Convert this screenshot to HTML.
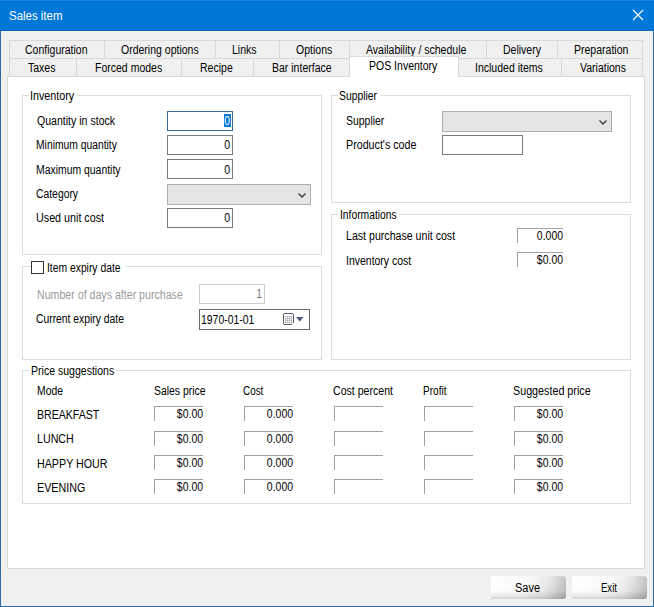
<!DOCTYPE html>
<html><head><meta charset="utf-8"><style>
html,body{margin:0;padding:0;width:654px;height:607px;overflow:hidden;background:#F0F0F0}
body>div,body>svg{position:absolute;box-sizing:border-box}
.t{font-family:"Liberation Sans", sans-serif;font-size:12px;line-height:14px;white-space:nowrap;transform-origin:0 0}
.r{text-align:right}
.btn{border-radius:2px 3px 3px 1px;background:linear-gradient(180deg,rgba(0,0,0,0) 0%,rgba(0,0,0,0) 62%,rgba(0,0,0,.07) 85%,rgba(0,0,0,.16) 100%),linear-gradient(112deg,#ffffff 0%,#f9f9f9 48%,#e6e6e6 72%,#c2c2c2 92%,#b0b0b0 100%)}
</style></head><body>
<div style="left:0px;top:0px;width:654px;height:31px;background:#0078D7"></div>
<div style="left:0px;top:0px;width:654px;height:1px;background:#1A85DC"></div>
<div style="left:0px;top:30px;width:654px;height:1px;background:#0F66B8"></div>
<div class="t" style="left:8.75px;top:9px;color:#fff;transform:scaleX(0.954);">Sales item</div>
<svg style="position:absolute;left:632px;top:9px" width="12" height="12" viewBox="0 0 12 12"><path d="M1 1L11 11M11 1L1 11" stroke="#fff" stroke-width="1.1"/></svg>
<div style="left:0px;top:31px;width:1px;height:576px;background:#2E6A9E"></div>
<div style="left:653px;top:31px;width:1px;height:576px;background:#2E6A9E"></div>
<div style="left:0px;top:606px;width:654px;height:1px;background:#1B70B8"></div>
<div style="left:7px;top:76px;width:638px;height:493px;border:1px solid #D9D9D9;background:#fff;"></div>
<div style="left:9px;top:40px;width:96px;height:19px;border:1px solid #D9D9D9;background:#F0F0F0;"></div>
<div class="t" style="left:24.5px;top:43px;color:#000;transform:scaleX(0.876);">Configuration</div>
<div style="left:104px;top:40px;width:112px;height:19px;border:1px solid #D9D9D9;background:#F0F0F0;"></div>
<div class="t" style="left:120.5px;top:43px;color:#000;transform:scaleX(0.876);">Ordering options</div>
<div style="left:215px;top:40px;width:65px;height:19px;border:1px solid #D9D9D9;background:#F0F0F0;"></div>
<div class="t" style="left:231.5px;top:43px;color:#000;transform:scaleX(0.876);">Links</div>
<div style="left:279px;top:40px;width:71px;height:19px;border:1px solid #D9D9D9;background:#F0F0F0;"></div>
<div class="t" style="left:295.5px;top:43px;color:#000;transform:scaleX(0.876);">Options</div>
<div style="left:349px;top:40px;width:138px;height:19px;border:1px solid #D9D9D9;background:#F0F0F0;"></div>
<div class="t" style="left:365.5px;top:43px;color:#000;transform:scaleX(0.876);">Availability / schedule</div>
<div style="left:486px;top:40px;width:72px;height:19px;border:1px solid #D9D9D9;background:#F0F0F0;"></div>
<div class="t" style="left:502.5px;top:43px;color:#000;transform:scaleX(0.876);">Delivery</div>
<div style="left:557px;top:40px;width:86px;height:19px;border:1px solid #D9D9D9;background:#F0F0F0;"></div>
<div class="t" style="left:573.5px;top:43px;color:#000;transform:scaleX(0.876);">Preparation</div>
<div style="left:9px;top:58px;width:68px;height:19px;border:1px solid #D9D9D9;background:#F0F0F0;"></div>
<div class="t" style="left:27.5px;top:61px;color:#000;transform:scaleX(0.876);">Taxes</div>
<div style="left:76px;top:58px;width:106px;height:19px;border:1px solid #D9D9D9;background:#F0F0F0;"></div>
<div class="t" style="left:94.5px;top:61px;color:#000;transform:scaleX(0.876);">Forced modes</div>
<div style="left:181px;top:58px;width:73px;height:19px;border:1px solid #D9D9D9;background:#F0F0F0;"></div>
<div class="t" style="left:199.5px;top:61px;color:#000;transform:scaleX(0.876);">Recipe</div>
<div style="left:253px;top:58px;width:97px;height:19px;border:1px solid #D9D9D9;background:#F0F0F0;"></div>
<div class="t" style="left:271.5px;top:61px;color:#000;transform:scaleX(0.876);">Bar interface</div>
<div style="left:458px;top:58px;width:104px;height:19px;border:1px solid #D9D9D9;background:#F0F0F0;"></div>
<div class="t" style="left:474.5px;top:61px;color:#000;transform:scaleX(0.876);">Included items</div>
<div style="left:561px;top:58px;width:82px;height:19px;border:1px solid #D9D9D9;background:#F0F0F0;"></div>
<div class="t" style="left:579.5px;top:61px;color:#000;transform:scaleX(0.876);">Variations</div>
<div style="left:349px;top:56px;width:110px;height:21px;border:1px solid #D9D9D9;border-bottom:none;background:#fff"></div>
<div class="t" style="left:369px;top:59px;color:#000;transform:scaleX(0.876);">POS Inventory</div>
<div style="left:22px;top:95px;width:300px;height:160px;border:1px solid #DCDCDC;background:transparent;"></div>
<div style="left:29px;top:95px;width:48px;height:1px;background:#fff"></div>
<div class="t" style="left:30.2px;top:89px;color:#000;transform:scaleX(0.896);">Inventory</div>
<div style="left:331px;top:95px;width:300px;height:108px;border:1px solid #DCDCDC;background:transparent;"></div>
<div style="left:338px;top:95px;width:43px;height:1px;background:#fff"></div>
<div class="t" style="left:339.44px;top:89px;color:#000;transform:scaleX(0.863);">Supplier</div>
<div style="left:331px;top:214px;width:300px;height:146px;border:1px solid #DCDCDC;background:transparent;"></div>
<div style="left:338px;top:214px;width:61px;height:1px;background:#fff"></div>
<div class="t" style="left:339.54px;top:208px;color:#000;transform:scaleX(0.858);">Informations</div>
<div style="left:22px;top:370px;width:609px;height:134px;border:1px solid #DCDCDC;background:transparent;"></div>
<div style="left:29px;top:370px;width:87px;height:1px;background:#fff"></div>
<div class="t" style="left:30.62px;top:364px;color:#000;transform:scaleX(0.878);">Price suggestions</div>
<div style="left:22px;top:266px;width:300px;height:94px;border:1px solid #DCDCDC;background:transparent;"></div>
<div style="left:31px;top:266px;width:95px;height:1px;background:#fff"></div>
<div style="left:31px;top:261px;width:13px;height:13px;border:1px solid #333333;background:#fff;"></div>
<div class="t" style="left:46.84px;top:261px;color:#000;transform:scaleX(0.861);">Item expiry date</div>
<div class="t" style="left:36.7px;top:114px;color:#000;transform:scaleX(0.880);">Quantity in stock</div>
<div class="t" style="left:36.14px;top:138px;color:#000;transform:scaleX(0.860);">Minimum quantity</div>
<div class="t" style="left:36.13px;top:163px;color:#000;transform:scaleX(0.868);">Maximum quantity</div>
<div class="t" style="left:36.14px;top:187px;color:#000;transform:scaleX(0.863);">Category</div>
<div class="t" style="left:36.11px;top:211px;color:#000;transform:scaleX(0.895);">Used unit cost</div>
<div style="left:167px;top:111px;width:66px;height:20px;border:1px solid #3A6B9B;background:#fff;"></div>
<div style="left:224px;top:114px;width:7px;height:13px;background:#0078D7"></div>
<div class="t r" style="left:30px;width:200px;top:114px;color:#fff;transform:scaleX(0.87);transform-origin:100% 0;">0</div>
<div style="left:167px;top:135px;width:66px;height:20px;border:1px solid #7A7A7A;background:#fff;"></div>
<div class="t r" style="left:30px;width:200px;top:138px;color:#000;transform:scaleX(0.87);transform-origin:100% 0;">0</div>
<div style="left:167px;top:159px;width:66px;height:20px;border:1px solid #7A7A7A;background:#fff;"></div>
<div class="t r" style="left:30px;width:200px;top:163px;color:#000;transform:scaleX(0.87);transform-origin:100% 0;">0</div>
<div style="left:167px;top:184px;width:144px;height:21px;border:1px solid #ADADAD;background:#E5E5E5;"></div>
<svg style="position:absolute;left:297px;top:192px" width="10" height="8" viewBox="0 0 10 8"><path d="M1.5 1.5L5 5L8.5 1.5" fill="none" stroke="#383838" stroke-width="1.25"/></svg>
<div style="left:167px;top:208px;width:66px;height:20px;border:1px solid #7A7A7A;background:#fff;"></div>
<div class="t r" style="left:30px;width:200px;top:211px;color:#000;transform:scaleX(0.87);transform-origin:100% 0;">0</div>
<div class="t" style="left:345.63px;top:114px;color:#000;transform:scaleX(0.870);">Supplier</div>
<div class="t" style="left:345.61px;top:138px;color:#000;transform:scaleX(0.891);">Product&#39;s code</div>
<div style="left:442px;top:111px;width:170px;height:21px;border:1px solid #ADADAD;background:#E5E5E5;"></div>
<svg style="position:absolute;left:598px;top:119px" width="10" height="8" viewBox="0 0 10 8"><path d="M1.5 1.5L5 5L8.5 1.5" fill="none" stroke="#383838" stroke-width="1.25"/></svg>
<div style="left:442px;top:135px;width:81px;height:20px;border:1px solid #7A7A7A;background:#fff;"></div>
<div class="t" style="left:346.12px;top:229px;color:#000;transform:scaleX(0.884);">Last purchase unit cost</div>
<div class="t" style="left:346.13px;top:254px;color:#000;transform:scaleX(0.873);">Inventory cost</div>
<div style="left:517px;top:228px;width:46px;height:15px;border-top:1px solid #A0A0A0;border-left:1px solid #A0A0A0"></div>
<div class="t r" style="left:363px;width:200px;top:229px;color:#000;transform:scaleX(0.87);transform-origin:100% 0;">0.000</div>
<div style="left:517px;top:252px;width:46px;height:15px;border-top:1px solid #A0A0A0;border-left:1px solid #A0A0A0"></div>
<div class="t r" style="left:363px;width:200px;top:253px;color:#000;transform:scaleX(0.87);transform-origin:100% 0;">$0.00</div>
<div class="t" style="left:36.91px;top:288px;color:#9A9A9A;transform:scaleX(0.885);">Number of days after purchase</div>
<div style="left:199px;top:284px;width:66px;height:20px;border:1px solid #CCCCCC;background:#fff;"></div>
<div class="t r" style="left:61.5px;width:200px;top:287px;color:#7A7A7A;transform:scaleX(0.87);transform-origin:100% 0;">1</div>
<div class="t" style="left:35.64px;top:312px;color:#000;transform:scaleX(0.862);">Current expiry date</div>
<div style="left:199px;top:309px;width:111px;height:21px;border:1px solid #6A6A6A;background:#fff;"></div>
<div class="t" style="left:201.03px;top:313px;color:#000;transform:scaleX(0.868);">1970-01-01</div>
<svg style="position:absolute;left:283px;top:313px" width="12" height="12" viewBox="0 0 12 12" shape-rendering="crispEdges"><path d="M1.5 0.5H9.5L10.5 1.5V9.5L8.5 11.5H1.5L0.5 10.5V1.5Z" fill="#fff" stroke="#5A5A5A"/><rect x="2" y="3" width="7" height="7" fill="#BCC4D0"/><rect x="3" y="4" width="1" height="1" fill="#fff"/><rect x="5" y="4" width="1" height="1" fill="#fff"/><rect x="7" y="4" width="1" height="1" fill="#fff"/><rect x="3" y="6" width="1" height="1" fill="#fff"/><rect x="5" y="6" width="1" height="1" fill="#fff"/><rect x="7" y="6" width="1" height="1" fill="#fff"/><rect x="3" y="8" width="1" height="1" fill="#fff"/><rect x="5" y="8" width="1" height="1" fill="#fff"/><rect x="7" y="8" width="1" height="1" fill="#fff"/><rect x="8" y="9" width="2" height="2" fill="#D0D0D0"/></svg>
<svg style="position:absolute;left:296px;top:317px" width="8" height="5" viewBox="0 0 8 5"><path d="M0 0H7.5L3.75 4.5Z" fill="#4A5A78"/></svg>
<div class="t" style="left:36.93px;top:384px;color:#000;transform:scaleX(0.866);">Mode</div>
<div class="t" style="left:153.73px;top:384px;color:#000;transform:scaleX(0.869);">Sales price</div>
<div class="t" style="left:243.18px;top:384px;color:#000;transform:scaleX(0.825);">Cost</div>
<div class="t" style="left:333.02px;top:384px;color:#000;transform:scaleX(0.882);">Cost percent</div>
<div class="t" style="left:423.16px;top:384px;color:#000;transform:scaleX(0.837);">Profit</div>
<div class="t" style="left:513.1px;top:384px;color:#000;transform:scaleX(0.895);">Suggested price</div>
<div class="t" style="left:36.92px;top:408px;color:#000;transform:scaleX(0.881);">BREAKFAST</div>
<div style="left:154px;top:406px;width:49px;height:15px;border-top:1px solid #A0A0A0;border-left:1px solid #A0A0A0"></div>
<div class="t r" style="left:3px;width:200px;top:407px;color:#000;transform:scaleX(0.87);transform-origin:100% 0;">$0.00</div>
<div style="left:244px;top:406px;width:49px;height:15px;border-top:1px solid #A0A0A0;border-left:1px solid #A0A0A0"></div>
<div class="t r" style="left:93px;width:200px;top:407px;color:#000;transform:scaleX(0.87);transform-origin:100% 0;">0.000</div>
<div style="left:334px;top:406px;width:49px;height:15px;border-top:1px solid #A0A0A0;border-left:1px solid #A0A0A0"></div>
<div style="left:424px;top:406px;width:49px;height:15px;border-top:1px solid #A0A0A0;border-left:1px solid #A0A0A0"></div>
<div style="left:514px;top:406px;width:49px;height:15px;border-top:1px solid #A0A0A0;border-left:1px solid #A0A0A0"></div>
<div class="t r" style="left:363px;width:200px;top:407px;color:#000;transform:scaleX(0.87);transform-origin:100% 0;">$0.00</div>
<div class="t" style="left:36.91px;top:432px;color:#000;transform:scaleX(0.890);">LUNCH</div>
<div style="left:154px;top:431px;width:49px;height:15px;border-top:1px solid #A0A0A0;border-left:1px solid #A0A0A0"></div>
<div class="t r" style="left:3px;width:200px;top:432px;color:#000;transform:scaleX(0.87);transform-origin:100% 0;">$0.00</div>
<div style="left:244px;top:431px;width:49px;height:15px;border-top:1px solid #A0A0A0;border-left:1px solid #A0A0A0"></div>
<div class="t r" style="left:93px;width:200px;top:432px;color:#000;transform:scaleX(0.87);transform-origin:100% 0;">0.000</div>
<div style="left:334px;top:431px;width:49px;height:15px;border-top:1px solid #A0A0A0;border-left:1px solid #A0A0A0"></div>
<div style="left:424px;top:431px;width:49px;height:15px;border-top:1px solid #A0A0A0;border-left:1px solid #A0A0A0"></div>
<div style="left:514px;top:431px;width:49px;height:15px;border-top:1px solid #A0A0A0;border-left:1px solid #A0A0A0"></div>
<div class="t r" style="left:363px;width:200px;top:432px;color:#000;transform:scaleX(0.87);transform-origin:100% 0;">$0.00</div>
<div class="t" style="left:36.91px;top:457px;color:#000;transform:scaleX(0.892);">HAPPY HOUR</div>
<div style="left:154px;top:455px;width:49px;height:15px;border-top:1px solid #A0A0A0;border-left:1px solid #A0A0A0"></div>
<div class="t r" style="left:3px;width:200px;top:456px;color:#000;transform:scaleX(0.87);transform-origin:100% 0;">$0.00</div>
<div style="left:244px;top:455px;width:49px;height:15px;border-top:1px solid #A0A0A0;border-left:1px solid #A0A0A0"></div>
<div class="t r" style="left:93px;width:200px;top:456px;color:#000;transform:scaleX(0.87);transform-origin:100% 0;">0.000</div>
<div style="left:334px;top:455px;width:49px;height:15px;border-top:1px solid #A0A0A0;border-left:1px solid #A0A0A0"></div>
<div style="left:424px;top:455px;width:49px;height:15px;border-top:1px solid #A0A0A0;border-left:1px solid #A0A0A0"></div>
<div style="left:514px;top:455px;width:49px;height:15px;border-top:1px solid #A0A0A0;border-left:1px solid #A0A0A0"></div>
<div class="t r" style="left:363px;width:200px;top:456px;color:#000;transform:scaleX(0.87);transform-origin:100% 0;">$0.00</div>
<div class="t" style="left:36.91px;top:481px;color:#000;transform:scaleX(0.894);">EVENING</div>
<div style="left:154px;top:479px;width:49px;height:15px;border-top:1px solid #A0A0A0;border-left:1px solid #A0A0A0"></div>
<div class="t r" style="left:3px;width:200px;top:480px;color:#000;transform:scaleX(0.87);transform-origin:100% 0;">$0.00</div>
<div style="left:244px;top:479px;width:49px;height:15px;border-top:1px solid #A0A0A0;border-left:1px solid #A0A0A0"></div>
<div class="t r" style="left:93px;width:200px;top:480px;color:#000;transform:scaleX(0.87);transform-origin:100% 0;">0.000</div>
<div style="left:334px;top:479px;width:49px;height:15px;border-top:1px solid #A0A0A0;border-left:1px solid #A0A0A0"></div>
<div style="left:424px;top:479px;width:49px;height:15px;border-top:1px solid #A0A0A0;border-left:1px solid #A0A0A0"></div>
<div style="left:514px;top:479px;width:49px;height:15px;border-top:1px solid #A0A0A0;border-left:1px solid #A0A0A0"></div>
<div class="t r" style="left:363px;width:200px;top:480px;color:#000;transform:scaleX(0.87);transform-origin:100% 0;">$0.00</div>
<div class="btn" style="left:491px;top:576px;width:75px;height:23px"></div>
<div class="t" style="left:515.28px;top:581px;color:#000;transform:scaleX(0.915);">Save</div>
<div class="btn" style="left:572px;top:576px;width:75px;height:23px"></div>
<div class="t" style="left:600.91px;top:581px;color:#000;transform:scaleX(0.795);">Exit</div>
</body></html>
